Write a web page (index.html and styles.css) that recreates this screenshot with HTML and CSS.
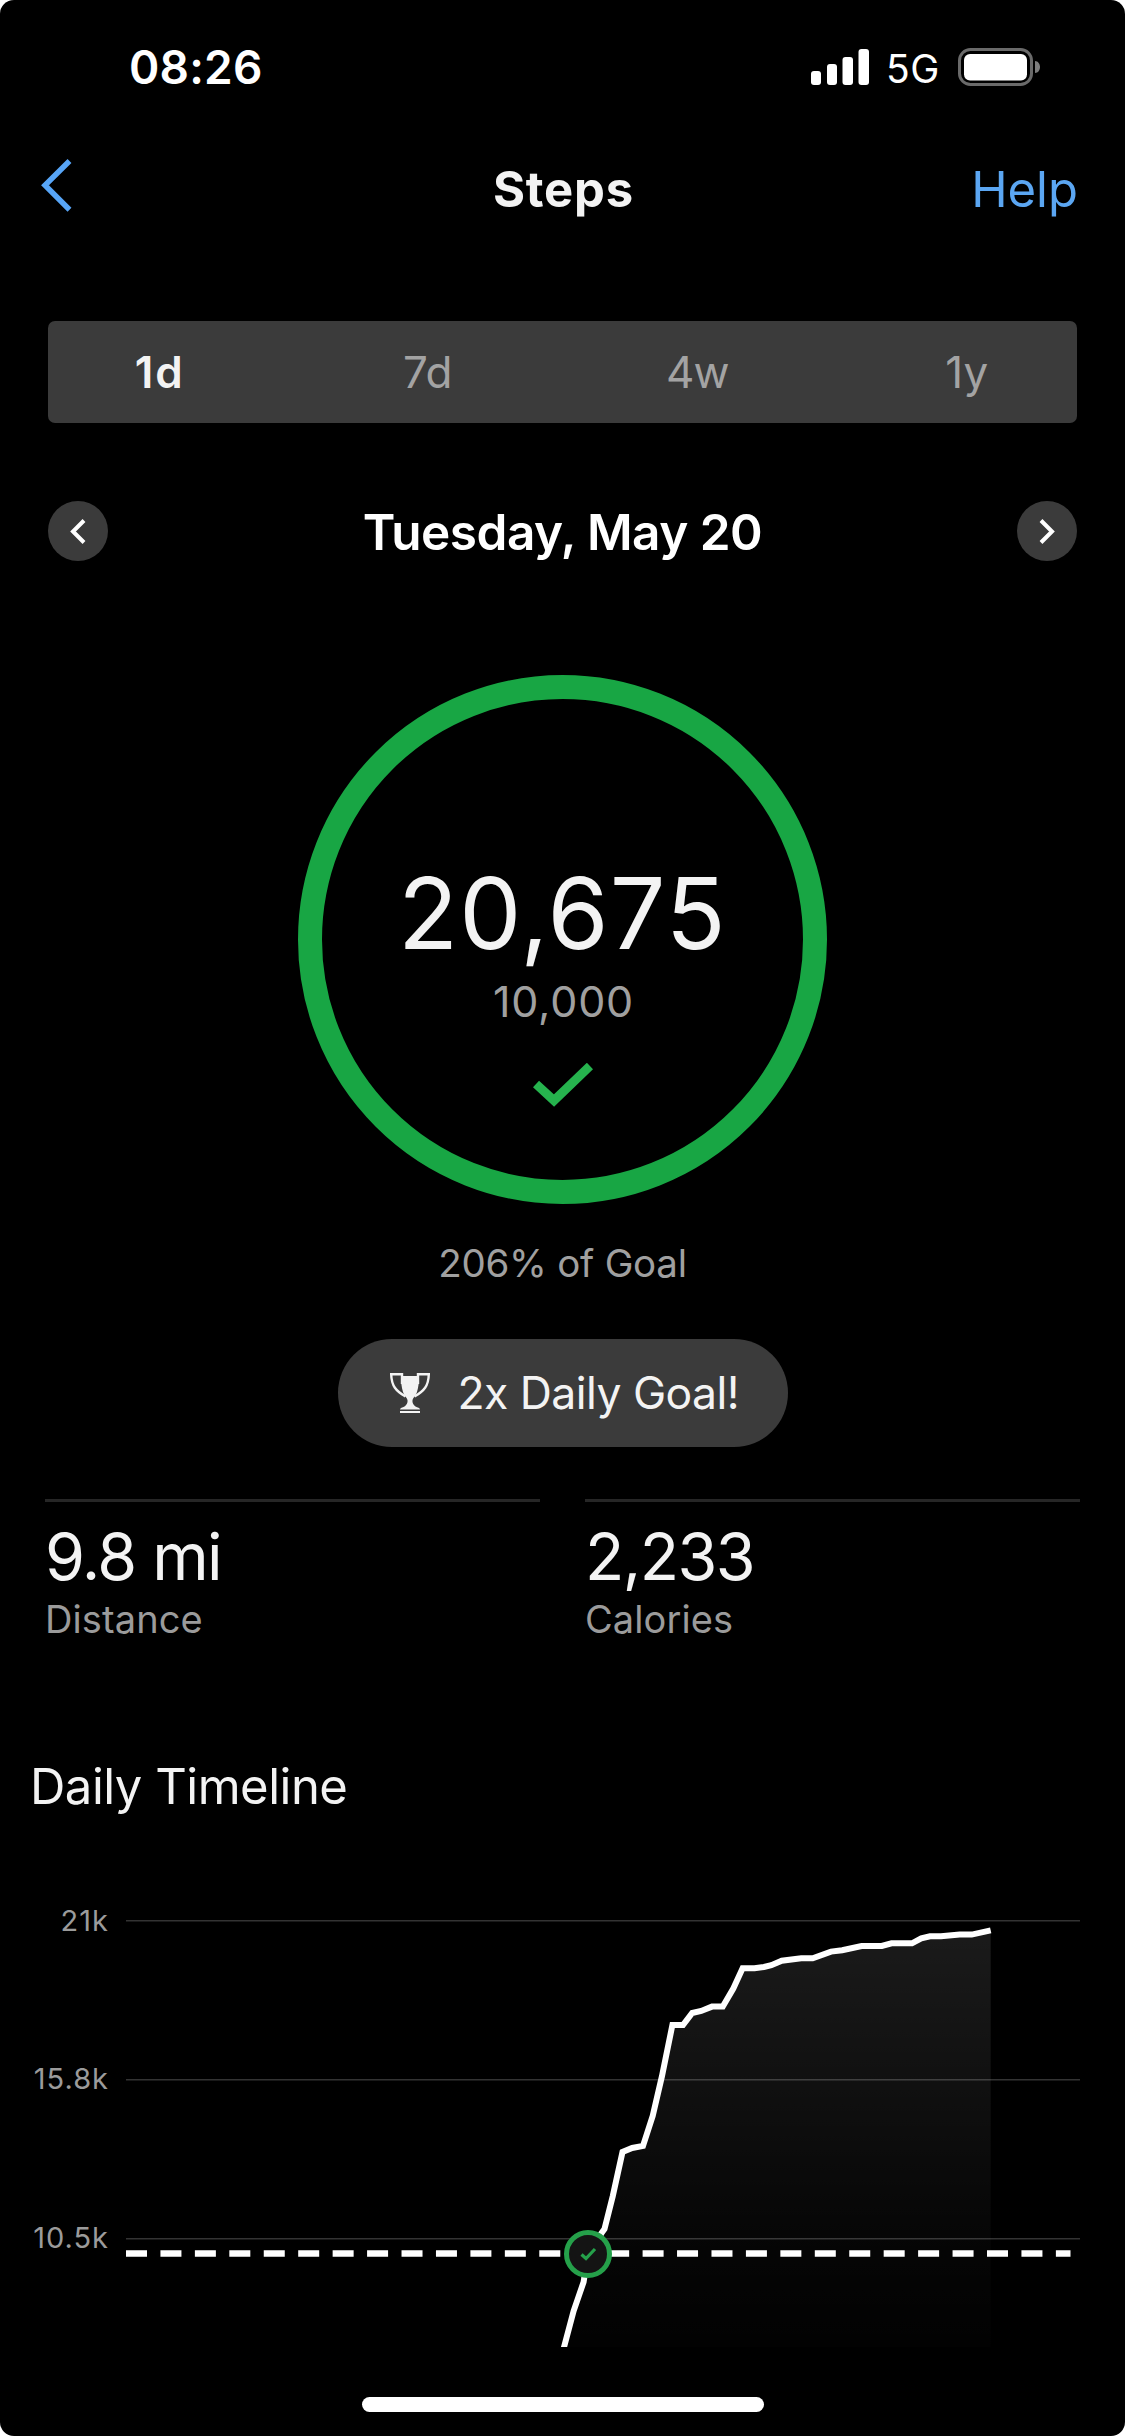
FILE: index.html
```html
<!DOCTYPE html>
<html lang="en">
<head>
  <meta charset="UTF-8">
  <title>Steps</title>
  <link rel="stylesheet" href="styles.css">
</head>
<body>
  <div class="screen">
    <!-- Status bar -->
    <div class="status-bar">
      <span class="time">08:26</span>
      <div class="status-icons">
        <svg class="signal" width="58" height="36" viewBox="0 0 58 36" fill="#fff">
          <rect x="0" y="22" width="10" height="14" rx="3"/>
          <rect x="16" y="15" width="10" height="21" rx="3"/>
          <rect x="31.5" y="8" width="10.5" height="28" rx="3"/>
          <rect x="47.5" y="0" width="10.5" height="36" rx="3"/>
        </svg>
        <span class="network">5G</span>
        <svg class="battery" width="83" height="38" viewBox="0 0 83 38">
          <rect x="1.5" y="1.5" width="72" height="35" rx="11" fill="none" stroke="#6a6a6a" stroke-width="3"/>
          <rect x="6" y="6" width="63" height="26.5" rx="6" fill="#fff"/>
          <path d="M77 13c3 0 5 3 5 6s-2 6-5 6z" fill="#7d7d7d"/>
        </svg>
      </div>
    </div>

    <!-- Header -->
    <div class="nav-bar">
      <svg class="back" width="31" height="53" viewBox="0 0 31 53">
        <path d="M28.5 2L4 26.3l24.5 24.5" fill="none" stroke="#57a5f7" stroke-width="5.5"/>
      </svg>
      <h1>Steps</h1>
      <a class="help">Help</a>
    </div>

    <!-- Range tabs -->
    <div class="tabs">
      <span class="tab active">1d</span>
      <span class="tab">7d</span>
      <span class="tab narrow">4w</span>
      <span class="tab">1y</span>
    </div>

    <div class="date-row">
      <div class="circle-btn">
        <svg width="16" height="25" viewBox="0 0 16 25">
          <path d="M14 1.5L3 12.5l11 11" fill="none" stroke="#fff" stroke-width="4"/>
        </svg>
      </div>
      <h2>Tuesday, May 20</h2>
      <div class="circle-btn">
        <svg width="16" height="25" viewBox="0 0 16 25">
          <path d="M2 1.5l11 11-11 11" fill="none" stroke="#fff" stroke-width="4"/>
        </svg>
      </div>
    </div>

    <!-- Goal ring -->
    <div class="ring">
      <div class="steps">20,675</div>
      <div class="goal">10,000</div>
      <svg class="check" width="60" height="44" viewBox="0 0 60 44">
        <path d="M3 21l18 16.5L57 3" fill="none" stroke="#26b34e" stroke-width="9"/>
      </svg>
    </div>
    <div class="percent">206% of Goal</div>

    <div class="badge">
      <svg width="40" height="40" viewBox="0 0 40 40">
        <path d="M11 3h18c0 6-.5 11-2 16-1 3.500-4 5.500-4.500 8-.5 3 1 5 3 6.500 2 1 4.500 1.500 4.500 3H10c0-1.500 2.500-2 4.500-3 2-1.500 3.500-3.500 3-6.500-.5-2.500-3.500-4.500-4.500-8-1.500-5-2-10-2-16z" fill="#f3f3f3"/>
        <path d="M12 11V1.200H1.200C1.500 13 6 18 15.500 23.500M28 11V1.200h10.800C38.500 13 34 18 24.500 23.500" fill="none" stroke="#f3f3f3" stroke-width="2.400"/>
        <rect x="10" y="38" width="20" height="2" fill="#f3f3f3"/>
      </svg>
      <span>2x Daily Goal!</span>
    </div>

    <!-- Stats -->
    <div class="stats">
      <div class="stat">
        <div class="stat-value">9.8 mi</div>
        <div class="stat-label">Distance</div>
      </div>
      <div class="stat">
        <div class="stat-value">2,233</div>
        <div class="stat-label">Calories</div>
      </div>
    </div>

    <h3>Daily Timeline</h3>

    <svg class="chart" width="1125" height="447" viewBox="0 0 1125 447">
      <defs>
        <linearGradient id="area" gradientUnits="userSpaceOnUse" x1="0" y1="30" x2="0" y2="447">
          <stop offset="0" stop-color="#fff" stop-opacity="0.105"/>
          <stop offset="0.75" stop-color="#fff" stop-opacity="0.022"/>
          <stop offset="1" stop-color="#fff" stop-opacity="0.008"/>
        </linearGradient>
      </defs>
      <text class="axis" x="109" y="31">21k</text>
      <text class="axis" x="109" y="189">15.8k</text>
      <text class="axis" x="109" y="348">10.5k</text>

      <rect class="grid" x="126" y="20" width="954" height="1.5"/>
      <rect class="grid" x="126" y="179" width="954" height="1.5"/>
      <rect class="grid" x="126" y="338" width="954" height="1.5"/>

      <line class="goal-line" x1="126" y1="353.5" x2="1070.5" y2="353.5"/>

      <polygon fill="url(#area)" points="564,447 573.6,411 583.6,382 588,354 601.6,333 604.5,329 612.8,296 622.5,252 632.2,248 643,246 652.7,216 662,176 672.4,125 683,125 692.2,113 701.2,111 712,106.6 722.8,106.6 733.3,88.5 742.6,68.3 754.5,68.3 763.9,67 771.3,65.2 781.8,60.7 801.2,58.2 812.7,58.2 831,51.6 842.2,50.2 861.6,46 881.8,46 891.5,43.3 912,43.3 921.3,38.4 930,36.3 941,36.3 959.7,34.6 971.7,34.6 990.7,30.4 990.7,447"/>
      <polyline class="curve" points="563,451 573.6,411 583.6,382 588,354 601.6,333 604.5,329 612.8,296 622.5,252 632.2,248 643,246 652.7,216 662,176 672.4,125 683,125 692.2,113 701.2,111 712,106.6 722.8,106.6 733.3,88.5 742.6,68.3 754.5,68.3 763.9,67 771.3,65.2 781.8,60.7 801.2,58.2 812.7,58.2 831,51.6 842.2,50.2 861.6,46 881.8,46 891.5,43.3 912,43.3 921.3,38.4 930,36.3 941,36.3 959.7,34.6 971.7,34.6 990.7,30.4"/>

      <circle cx="588" cy="354" r="21.5" fill="#141414" stroke="#25a04a" stroke-width="5"/>
      <path d="M581.5 354.5l4.500 4 9-9.500" fill="none" stroke="#25a04a" stroke-width="3.200"/>
    </svg>

    <div class="home-indicator"></div>
  </div>
</body>
</html>
```
FILE: styles.css
```css
* {
  box-sizing: border-box;
}
body {
  margin: 0;
  background: #fff;
  font-family: Inter, "Liberation Sans", sans-serif;
  color: #f3f3f3;
}
.screen {
  width: 1125px;
  height: 2436px;
  background: #000;
  border-radius: 14px;
  overflow: hidden;
}
h1, h2, h3 {
  margin: 0;
}

/* status bar */
.status-bar {
  height: 134px;
  padding: 0 84px 0 129px;
  display: flex;
  align-items: center;
  justify-content: space-between;
  color: #fff;
}
.time {
  font-size: 46px;
  font-weight: 600;
  letter-spacing: 0.2px;
}
.status-icons {
  display: flex;
  align-items: center;
}
.network {
  width: 72px;
  margin: 2px 0 0 17px;
  font-size: 39px;
  letter-spacing: 0.5px;
}

/* header */
.nav-bar {
  height: 110px;
  padding: 0 47px 0 41px;
  display: grid;
  grid-template-columns: 1fr auto 1fr;
  align-items: center;
}
.back {
  margin-bottom: 8px;
}
.nav-bar h1 {
  padding-left: 8px;
  font-size: 49px;
  font-weight: 700;
  letter-spacing: 0.8px;
}
.help {
  justify-self: end;
  font-size: 49px;
  color: #5ba6f2;
}

.tabs {
  height: 102px;
  margin: 77px 48px 0;
  display: flex;
  align-items: center;
  justify-content: center;
  background: #3b3b3b;
  border-radius: 7px;
}
.tab {
  flex: 0 0 269.5px;
  text-align: center;
  font-size: 44px;
  color: #a3a3a3;
}
.tab.active {
  padding-left: 3px;
  font-weight: 600;
  letter-spacing: 2px;
  color: #f3f3f3;
}
.tab.narrow {
  letter-spacing: -1px;
}

.date-row {
  margin: 78px 48px 0;
  height: 60px;
  display: flex;
  align-items: center;
  justify-content: space-between;
}
.date-row h2 {
  font-size: 49.5px;
  font-weight: 600;
  line-height: 60px;
  letter-spacing: -0.5px;
  padding-top: 2px;
  color: #fff;
}
.circle-btn {
  width: 60px;
  height: 60px;
  border-radius: 50%;
  background: #3b3b3b;
  display: flex;
  align-items: center;
  justify-content: center;
}

/* goal ring */
.ring {
  width: 529px;
  height: 529px;
  margin: 114px auto 0;
  padding-top: 165px;
  border: 24px solid #18a644;
  border-radius: 50%;
  display: flex;
  flex-direction: column;
  align-items: center;
}
.steps {
  font-size: 98.5px;
  line-height: 100px;
  letter-spacing: 1.3px;
}
.goal {
  margin-top: 9px;
  padding-left: 2px;
  font-size: 43px;
  line-height: 56px;
  letter-spacing: 0.8px;
  color: #a0a0a0;
}
.check {
  margin-top: 34px;
}
.percent {
  margin-top: 34px;
  text-align: center;
  font-size: 38.5px;
  line-height: 50px;
  letter-spacing: -0.25px;
  color: #a0a0a0;
}
.badge {
  width: 450px;
  height: 108px;
  margin: 51px auto 0;
  padding-left: 52px;
  border-radius: 54px;
  background: #3b3b3b;
  display: flex;
  align-items: center;
  gap: 28px;
  font-size: 44.5px;
  letter-spacing: -0.55px;
}

/* stats */
.stats {
  margin: 52px 45px 0;
  display: grid;
  grid-template-columns: 1fr 1fr;
  gap: 45px;
}
.stat {
  border-top: 3px solid #262626;
  padding-top: 20px;
}
.stat-value {
  font-size: 64.5px;
  line-height: 70px;
  letter-spacing: -1.6px;
}
.stat-label {
  margin-top: 3px;
  font-size: 38px;
  line-height: 48px;
  letter-spacing: 0.1px;
  color: #9b9b9b;
}

h3 {
  margin: 114px 0 0 30px;
  font-size: 49px;
  font-weight: 400;
  line-height: 60px;
  letter-spacing: -0.5px;
}

/* chart */
.chart {
  display: block;
  margin-top: 83px;
}
.axis {
  font-size: 29px;
  letter-spacing: 1px;
  text-anchor: end;
  fill: #9b9b9b;
}
.grid {
  fill: #333;
}
.goal-line {
  stroke: #fff;
  stroke-width: 6.5;
  stroke-dasharray: 21 13.44;
}
.curve {
  fill: none;
  stroke: #fff;
  stroke-width: 6;
}

.home-indicator {
  width: 402px;
  height: 15px;
  margin: 50px auto 0;
  border-radius: 8px;
  background: #fff;
}
```
